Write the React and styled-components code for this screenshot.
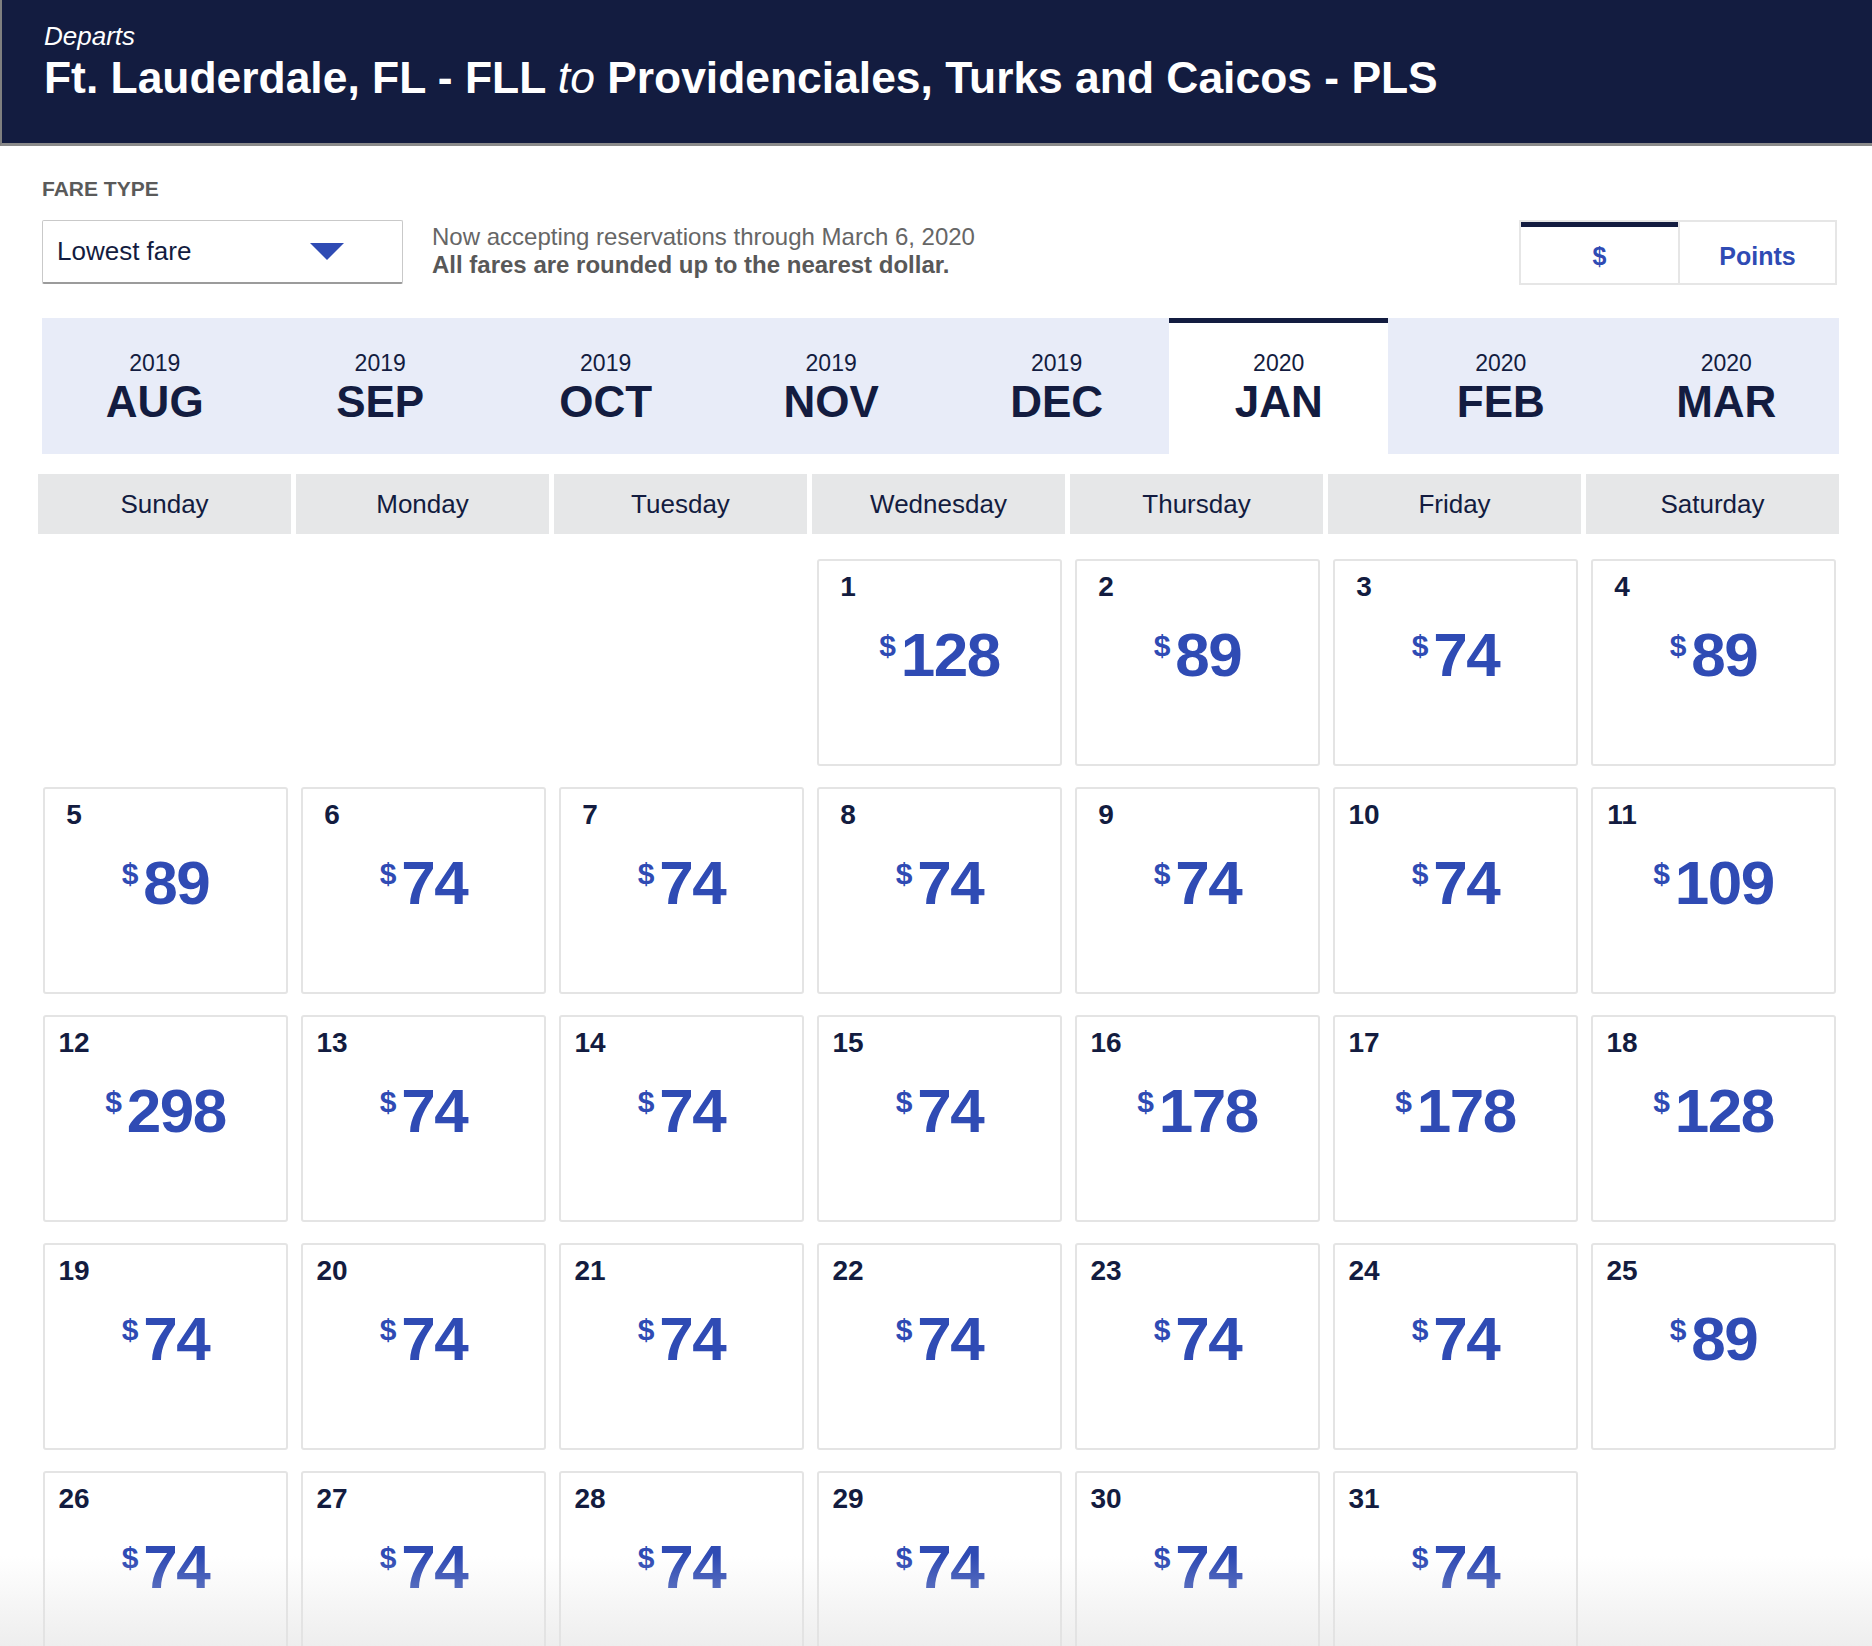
import * as React from 'react';
import styled, { createGlobalStyle } from 'styled-components';

const GlobalStyle = createGlobalStyle`
body{
  margin:0;
  background:#fff;
  font-family:"Liberation Sans", Arial, Helvetica, sans-serif;
}
`;

const NAVY = '#131c40';
const BLUE = '#2f4bb4';

const Page = styled.div`
height:100vh;
overflow:hidden;
position:relative;
`;
const Header = styled.header`
box-sizing:border-box;
height:146px;
background:${NAVY};
color:#fff;
padding:22px 0 0 42px;
border-left:2px solid #7f7f7f;
border-bottom:3px solid #8a8a8a;
`;
const Departs = styled.div`
font-style:italic;
font-size:26px;
line-height:28px;
`;
const Route = styled.h1`
margin:3px 0 0;
font-size:44.4px;
line-height:50px;
font-weight:700;
em{
  font-weight:400;
}
`;
const Main = styled.main`
padding:0 33px 0 38px;
`;
const FareLabel = styled.div`
margin:31px 0 19px 4px;
font-size:21px;
line-height:24px;
font-weight:700;
color:#5a5a5a;
`;
const Controls = styled.div`
display:flex;
align-items:flex-start;
margin-left:4px;
`;
const Select = styled.div`
box-sizing:border-box;
width:361px;
height:64px;
display:flex;
align-items:center;
justify-content:space-between;
padding:0 58px 0 14px;
border:1px solid #c9c9c9;
border-bottom:2px solid #9b9b9b;
border-radius:2px;
font-size:26px;
color:${NAVY};
`;
const Caret = styled.span`
width:0;
height:0;
border-left:17px solid transparent;
border-right:17px solid transparent;
border-top:17px solid ${BLUE};
`;
const Info = styled.div`
margin:3px 0 0 29px;
font-size:24px;
line-height:28px;
color:#666;
strong{
  display:block;
  color:#585858;
}
`;
const Toggle = styled.div`
display:flex;
margin:0 2px 0 auto;
border:2px solid #e6e6e6;
`;
const ToggleBtn = styled.div`
box-sizing:border-box;
width:157px;
height:61px;
display:flex;
align-items:center;
justify-content:center;
padding-top:8px;
font-size:25px;
font-weight:700;
color:${BLUE};
& + &{
  border-left:2px solid #e6e6e6;
}
${p => p.$active && `box-shadow: inset 0 5px 0 ${NAVY};`}
`;
const MonthStrip = styled.div`
display:grid;
grid-template-columns:repeat(5, 1fr) 0.97fr repeat(2, 1fr);
height:136px;
margin:33px 0 0 4px;
background:#e8ecf8;
`;
const MonthTab = styled.div`
text-align:center;
padding-top:32px;
color:${NAVY};
${p => p.$active && `background:#fff; box-shadow: inset 0 5px 0 ${NAVY};`}
`;
const Year = styled.div`
font-size:23px;
line-height:26px;
`;
const MonthName = styled.div`
margin-top:2px;
font-size:44px;
line-height:48px;
font-weight:700;
`;
const WeekRow = styled.div`
display:grid;
grid-template-columns:repeat(7, 1fr);
gap:5px;
margin-top:20px;
`;
const WeekDay = styled.div`
height:60px;
display:flex;
align-items:center;
justify-content:center;
background:#e6e7e8;
font-size:26px;
color:${NAVY};
`;
const DayGrid = styled.div`
display:grid;
grid-template-columns:repeat(7, 1fr);
grid-auto-rows:207px;
gap:21px 13px;
margin-top:25px;
padding:0 3px 0 5px;
`;
const DayCell = styled.div`
box-sizing:border-box;
border:2px solid #e4e4e4;
border-radius:3px;
padding:10px 4px 0;
`;
const DayNum = styled.div`
width:50px;
text-align:center;
font-size:28px;
line-height:32px;
font-weight:700;
color:${NAVY};
`;
const Price = styled.div`
display:flex;
justify-content:center;
align-items:flex-start;
margin-top:21px;
color:${BLUE};
font-weight:700;
`;
const Dollar = styled.span`
font-size:30px;
line-height:1;
margin:7px 5px 0 0;
`;
const Amount = styled.span`
font-size:62px;
line-height:1;
letter-spacing:-1.5px;
`;
const Fade = styled.div`
position:absolute;
left:0;
right:0;
bottom:0;
height:90px;
background:linear-gradient(rgba(255,255,255,0), rgba(226,226,226,0.6));
pointer-events:none;
`;

const months = [
    ['2019', 'AUG'], ['2019', 'SEP'], ['2019', 'OCT'], ['2019', 'NOV'],
    ['2019', 'DEC'], ['2020', 'JAN'], ['2020', 'FEB'], ['2020', 'MAR'],
];
const weekdays = ['Sunday', 'Monday', 'Tuesday', 'Wednesday', 'Thursday', 'Friday', 'Saturday'];
const fares = [
    128, 89, 74, 89,
    89, 74, 74, 74, 74, 74, 109,
    298, 74, 74, 74, 178, 178, 128,
    74, 74, 74, 74, 74, 74, 89,
    74, 74, 74, 74, 74, 74,
];

export default function App() {
    const blanks = [0, 1, 2];
    return (
        <Page>
            <GlobalStyle />
            <Header>
                <Departs>Departs</Departs>
                <Route>Ft. Lauderdale, FL - FLL <em>to</em> Providenciales, Turks and Caicos - PLS</Route>
            </Header>
            <Main>
                <FareLabel>FARE TYPE</FareLabel>
                <Controls>
                    <Select>
                        Lowest fare
                        <Caret />
                    </Select>
                    <Info>
                        Now accepting reservations through March 6, 2020
                        <strong>All fares are rounded up to the nearest dollar.</strong>
                    </Info>
                    <Toggle>
                        <ToggleBtn $active>$</ToggleBtn>
                        <ToggleBtn>Points</ToggleBtn>
                    </Toggle>
                </Controls>
                <MonthStrip>
                    {months.map(([y, m]) => (
                        <MonthTab key={m} $active={m === 'JAN'}>
                            <Year>{y}</Year>
                            <MonthName>{m}</MonthName>
                        </MonthTab>
                    ))}
                </MonthStrip>
                <WeekRow>
                    {weekdays.map(d => <WeekDay key={d}>{d}</WeekDay>)}
                </WeekRow>
                <DayGrid>
                    {blanks.map(b => <div key={'b' + b} />)}
                    {fares.map((f, i) => (
                        <DayCell key={i}>
                            <DayNum>{i + 1}</DayNum>
                            <Price>
                                <Dollar>$</Dollar>
                                <Amount>{f}</Amount>
                            </Price>
                        </DayCell>
                    ))}
                </DayGrid>
            </Main>
            <Fade />
        </Page>
    );
}
